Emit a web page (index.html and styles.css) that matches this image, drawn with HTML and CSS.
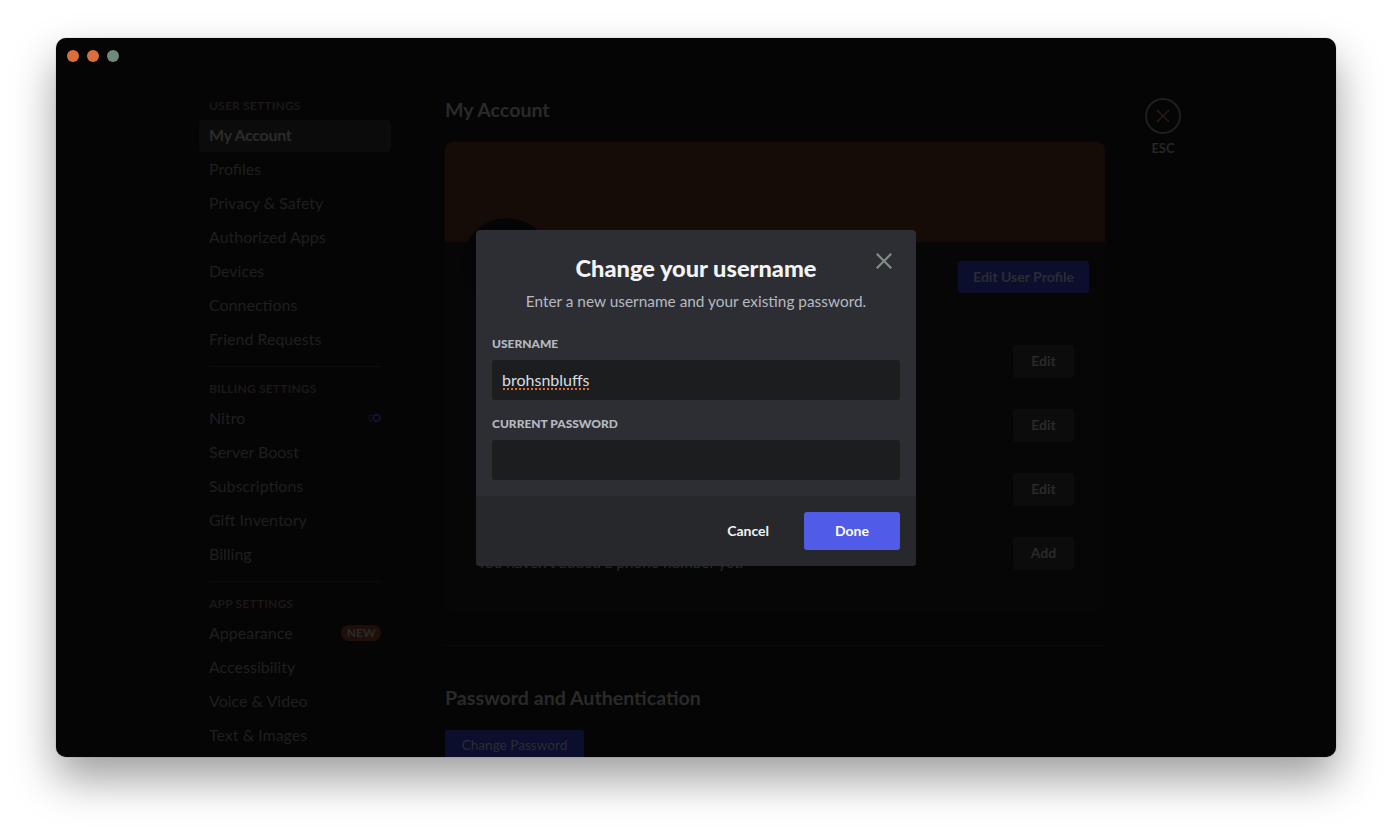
FILE: index.html
```html
<!DOCTYPE html>
<html lang="en">
<head>
    <meta charset="UTF-8">
    <meta name="viewport" content="width=device-width, initial-scale=1.0">
    <title>Change your username</title>
    <link rel="stylesheet" href="styles.css">
</head>
<body>
    <div class="window">
        <div class="titlebar">
            <span class="light light-orange"></span>
            <span class="light light-orange"></span>
            <span class="light light-green"></span>
        </div>

        <div class="settings">
            <nav class="sidebar">
                <div class="nav-heading">User Settings</div>
                <div class="nav-item active">My Account</div>
                <div class="nav-item">Profiles</div>
                <div class="nav-item">Privacy &amp; Safety</div>
                <div class="nav-item">Authorized Apps</div>
                <div class="nav-item">Devices</div>
                <div class="nav-item">Connections</div>
                <div class="nav-item">Friend Requests</div>
                <div class="nav-divider"></div>
                <div class="nav-heading">Billing Settings</div>
                <div class="nav-item">
                    <span>Nitro</span>
                    <svg class="nitro-icon" width="14" height="14" viewBox="0 0 14 14" fill="none">
                        <circle cx="8.5" cy="7" r="3.3" stroke="#121230" stroke-width="2.2"/>
                        <path d="M1 4.5h3M0 7h2.5M1 9.5h3" stroke="#121230" stroke-width="1.2"/>
                    </svg>
                </div>
                <div class="nav-item">Server Boost</div>
                <div class="nav-item">Subscriptions</div>
                <div class="nav-item">Gift Inventory</div>
                <div class="nav-item">Billing</div>
                <div class="nav-divider"></div>
                <div class="nav-heading">App Settings</div>
                <div class="nav-item">
                    <span>Appearance</span>
                    <span class="new-badge">NEW</span>
                </div>
                <div class="nav-item">Accessibility</div>
                <div class="nav-item">Voice &amp; Video</div>
                <div class="nav-item">Text &amp; Images</div>
            </nav>

            <main class="content">
                <h2 class="page-title">My Account</h2>
                <section class="account-card">
                    <div class="banner"></div>
                    <div class="avatar"></div>
                    <div class="profile-head">
                        <button class="btn-primary">Edit User Profile</button>
                    </div>
                    <div class="field-list">
                        <div class="field-row"><button class="btn-muted">Edit</button></div>
                        <div class="field-row"><button class="btn-muted">Edit</button></div>
                        <div class="field-row"><button class="btn-muted">Edit</button></div>
                        <div class="field-row">
                            <span class="field-value">You haven't added a phone number yet.</span>
                            <button class="btn-muted">Add</button>
                        </div>
                    </div>
                </section>
                <div class="content-divider"></div>
                <h2 class="section-title">Password and Authentication</h2>
                <button class="btn-primary btn-password">Change Password</button>
            </main>

            <div class="tools">
                <div class="esc-ring">
                    <svg width="18" height="18" viewBox="0 0 18 18">
                        <path d="M3 3L15 15M15 3L3 15" stroke="#2b1f1b" stroke-width="1.2" fill="none"/>
                    </svg>
                </div>
                <div class="esc-label">ESC</div>
            </div>
        </div>

        <!-- Change username dialog -->
        <div class="modal">
            <button class="modal-close">
                <svg width="24" height="24" viewBox="0 0 24 24">
                    <path fill="#7f8d83" d="M18.4 4L12 10.4L5.6 4L4 5.6L10.4 12L4 18.4L5.6 20L12 13.6L18.4 20L20 18.4L13.6 12L20 5.6L18.4 4Z"/>
                </svg>
            </button>
            <div class="modal-body">
                <h1 class="modal-title">Change your username</h1>
                <p class="modal-sub">Enter a new username and your existing password.</p>
                <div class="form-label form-label-first">Username</div>
                <div class="text-input"><span class="misspelled">brohsnbluffs</span></div>
                <div class="form-label">Current Password</div>
                <div class="text-input"></div>
            </div>
            <div class="modal-footer">
                <button class="btn-cancel">Cancel</button>
                <button class="btn-done">Done</button>
            </div>
        </div>
    </div>
</body>
</html>
```

FILE: styles.css
```css
body, html {
    margin: 0;
    padding: 0;
    width: 100%;
    height: 100%;
    background: #fff;
    font-family: Lato, sans-serif;
    overflow: hidden;
}

body {
    padding: 38px 0 0 56px;
    box-sizing: border-box;
}

button {
    font-family: inherit;
    border: none;
    cursor: pointer;
}

/* Desktop window */
.window {
    position: relative;
    display: flex;
    flex-direction: column;
    width: 1280px;
    height: 719px;
    background: #050505;
    border-radius: 10px;
    box-shadow: 0 22px 44px rgba(0, 0, 0, 0.38), 0 0 1px rgba(0, 0, 0, 0.5);
    overflow: hidden;
}

.titlebar {
    display: flex;
    flex: 0 0 36px;
    align-items: center;
    gap: 8px;
    padding-left: 11px;
}

.light {
    width: 12px;
    height: 12px;
    border-radius: 50%;
}

.light-orange {
    background: #d9703c;
}

.light-green {
    background: #6f8a78;
}

.settings {
    display: flex;
    flex: 1;
    min-height: 0;
}

/* Sidebar */
.sidebar {
    flex: 0 0 192px;
    padding: 24px 14px 0 143px;
}

.nav-heading {
    height: 16px;
    margin-bottom: 6px;
    padding-left: 10px;
    color: #1d1716;
    font-size: 12px;
    font-weight: 700;
    line-height: 16px;
    letter-spacing: 0.2px;
    text-transform: uppercase;
}

.nav-item {
    display: flex;
    justify-content: space-between;
    align-items: center;
    box-sizing: border-box;
    height: 32px;
    margin-bottom: 2px;
    padding: 0 10px 3px;
    border-radius: 4px;
    color: #1f1f1f;
    font-size: 16px;
}

.nav-item.active {
    background: #0b0b0b;
    color: #2b2b2b;
    font-weight: 700;
    letter-spacing: -0.3px;
}

.nav-divider {
    height: 1px;
    margin: 10px 10px 14px;
    background: #0c0c0c;
}

.nitro-icon {
    margin-right: -1px;
}

.new-badge {
    padding: 0 5.5px;
    border-radius: 8px;
    background: #1f0f0a;
    color: #2a2a2a;
    font-size: 12px;
    font-weight: 700;
    line-height: 16px;
}

/* Main column */
.content {
    flex: 0 0 660px;
    padding: 24px 0 0 40px;
}

.page-title,
.section-title {
    margin: 0;
    color: #2a2a2a;
    font-size: 19.6px;
    font-weight: 700;
    line-height: 24px;
}

.page-title {
    margin-bottom: 20px;
}

.account-card {
    position: relative;
    padding-bottom: 43px;
    border-radius: 8px;
    background: #060606;
}

.banner {
    height: 100px;
    border-radius: 8px 8px 0 0;
    background: #150c07;
}

.avatar {
    position: absolute;
    top: 76px;
    left: 17px;
    width: 90px;
    height: 90px;
    border-radius: 50%;
    background: #050505;
}

.profile-head {
    display: flex;
    justify-content: flex-end;
    padding: 19px 16px 0;
}

.btn-primary {
    width: 131px;
    height: 32px;
    padding: 0 0 2px;
    border-radius: 3px;
    background: #0b0e2c;
    color: #2c2c33;
    font-size: 14px;
    font-weight: 700;
}

.field-list {
    display: flex;
    flex-direction: column;
    gap: 31px;
    padding: 52px 31px 0 32px;
}

.field-row {
    display: flex;
    justify-content: flex-end;
    height: 33px;
}

.field-value {
    flex: 1;
    margin-top: 15px;
    color: #2a2a2a;
    font-size: 15.4px;
    line-height: 20px;
}

.btn-muted {
    width: 61px;
    height: 33px;
    padding: 0 0 2px;
    border-radius: 3px;
    background: #0c0c0c;
    color: #2a2a2a;
    font-size: 14px;
    font-weight: 700;
}

.content-divider {
    height: 1px;
    margin-top: 32px;
    background: #0c0c0c;
}

.section-title {
    margin: 40px 0 20px;
}

.btn-password {
    display: block;
    width: 139px;
    font-size: 13.6px;
    font-weight: 400;
}

/* Esc button */
.tools {
    display: flex;
    flex-direction: column;
    align-items: center;
    margin-left: 40px;
    padding-top: 24px;
    width: 36px;
}

.esc-ring {
    display: flex;
    justify-content: center;
    align-items: center;
    box-sizing: border-box;
    width: 36px;
    height: 36px;
    border: 2px solid #1f1f1f;
    border-radius: 50%;
}

.esc-label {
    margin-top: 6px;
    color: #262626;
    font-size: 13px;
    font-weight: 700;
    line-height: 16px;
}

/* Dialog */
.modal {
    position: absolute;
    top: 192px;
    left: 420px;
    width: 440px;
    border-radius: 4px;
    background: #2d2e33;
    overflow: hidden;
}

.modal-close {
    position: absolute;
    top: 19px;
    right: 20px;
    width: 24px;
    height: 24px;
    padding: 0;
    background: none;
}

.modal-body {
    padding: 23px 16px 16px;
}

.modal-title {
    margin: 0;
    color: #f2f3f5;
    font-size: 23.6px;
    font-weight: 900;
    line-height: 30px;
    text-align: center;
}

.modal-sub {
    margin: 8px 0 0;
    color: #b5bac1;
    font-size: 15.4px;
    line-height: 20px;
    text-align: center;
}

.form-label {
    margin: 16px 0 8px;
    color: #b5bac1;
    font-size: 12px;
    font-weight: 900;
    line-height: 16px;
    text-transform: uppercase;
}

.form-label-first {
    margin-top: 25px;
}

.text-input {
    box-sizing: border-box;
    height: 40px;
    padding: 0 10px;
    border-radius: 3px;
    background: #1c1d1f;
    color: #dbdee1;
    font-size: 16px;
    line-height: 40px;
}

.misspelled {
    padding-bottom: 1px;
    background: radial-gradient(circle, #d9703c 1px, transparent 1.2px) 0 100% / 4px 2px repeat-x;
}

.modal-footer {
    display: flex;
    justify-content: flex-end;
    gap: 19px;
    padding: 16px;
    background: #27282c;
}

.btn-cancel {
    height: 38px;
    padding: 0 16px 2px;
    background: none;
    color: #f2f3f5;
    font-size: 14px;
    font-weight: 700;
}

.btn-done {
    width: 96px;
    height: 38px;
    padding: 0 0 2px;
    border-radius: 3px;
    background: #505be8;
    color: #fff;
    font-size: 14px;
    font-weight: 700;
}
```
